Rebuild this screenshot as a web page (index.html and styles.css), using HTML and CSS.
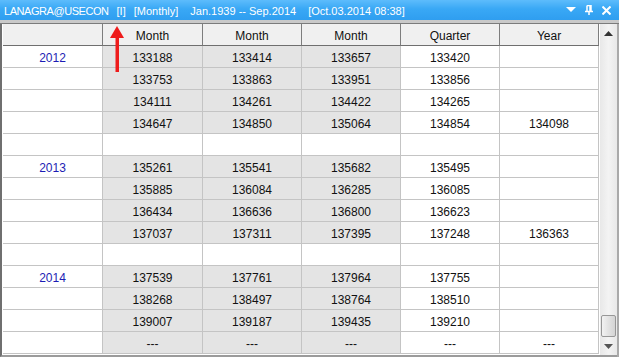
FILE: index.html
```html
<!DOCTYPE html>
<html lang="en">
<head>
  <meta charset="UTF-8">
  <title>LANAGRA@USECON</title>
  <link rel="stylesheet" href="styles.css">
</head>
<body>

<div class="window">

  <!-- title bar -->
  <div class="titlebar">
    <div class="title">
      <span class="user">LANAGRA@USECON</span>
      <span class="gap-s">[I]</span>
      <span class="gap-s">[Monthly]</span>
      <span class="gap-l">Jan.1939 -- Sep.2014</span>
      <span class="gap-l">[Oct.03.2014 08:38]</span>
    </div>
    <div class="controls">
      <svg width="10" height="6" viewBox="0 0 10 6"><path d="M0 0 H10 L5 5 Z" fill="#fff"/></svg>
      <svg width="8" height="10" viewBox="0 0 8 10"><path d="M2 0.5 H6 V6 M2 0.5 V6 M0 6.5 H8 M4 6.5 V10 M5 1 V6" stroke="#fff" stroke-width="1.5" fill="none"/></svg>
      <svg width="9" height="9" viewBox="0 0 9 9"><path d="M0.5 0.5 L8.5 8.5 M8.5 0.5 L0.5 8.5" stroke="#fff" stroke-width="2"/></svg>
    </div>
  </div>
  <div class="toolbar-edge"></div>

  <div class="content">
    <div class="grid" id="grid">
      <div class="hd"></div>
      <div class="hd">Month</div>
      <div class="hd">Month</div>
      <div class="hd">Month</div>
      <div class="hd">Quarter</div>
      <div class="hd">Year</div>
    </div>

    <div class="scrollbar">
      <div class="sb-btn"><svg width="9" height="5" viewBox="0 0 9 5"><path d="M0 5 L4.5 0 L9 5 Z" fill="#333"/></svg></div>
      <div class="sb-track"></div>
      <div class="sb-thumb"></div>
      <div class="sb-btn"><svg width="9" height="5" viewBox="0 0 9 5"><path d="M0 0 L4.5 5 L9 0 Z" fill="#555"/></svg></div>
    </div>
  </div>

  <!-- red pointer over the [I] marker -->
  <svg class="pointer" width="16" height="46" viewBox="0 0 16 46">
    <path d="M8 0 L15 12 L1 12 Z" fill="#ee1c1c"/>
    <rect x="6.5" y="11" width="3.5" height="35" fill="#ee1c1c"/>
  </svg>
</div>

<script>
  const data = [
    ["2012", "133188", "133414", "133657", "133420", ""],
    ["", "133753", "133863", "133951", "133856", ""],
    ["", "134111", "134261", "134422", "134265", ""],
    ["", "134647", "134850", "135064", "134854", "134098"],
    null,
    ["2013", "135261", "135541", "135682", "135495", ""],
    ["", "135885", "136084", "136285", "136085", ""],
    ["", "136434", "136636", "136800", "136623", ""],
    ["", "137037", "137311", "137395", "137248", "136363"],
    null,
    ["2014", "137539", "137761", "137964", "137755", ""],
    ["", "138268", "138497", "138764", "138510", ""],
    ["", "139007", "139187", "139435", "139210", ""],
    ["", "---", "---", "---", "---", "---"]
  ];

  const grid = document.getElementById("grid");
  data.forEach(row => {
    for (let i = 0; i < 6; i++) {
      const cell = document.createElement("div");
      cell.className = "cell";
      if (row && i >= 1 && i <= 3) cell.classList.add("month");
      if (row && i === 0) cell.classList.add("year");
      cell.textContent = row ? row[i] : "";
      grid.appendChild(cell);
    }
  });
</script>

</body>
</html>
```

FILE: styles.css
```css
body {
  margin: 0;
  font-family: 'Liberation Sans', Arial, sans-serif;
  font-size: 11px;
  background: #fff;
}

.window {
  position: relative;
  width: 619px;
  height: 357px;
  overflow: hidden;
  background: #a9a9a9;
}

.titlebar {
  height: 20px;
  display: flex;
  align-items: center;
  justify-content: space-between;
  background: linear-gradient(#5dbcfc, #39a8f5 45%, #2f9ef0);
  color: #fff;
  font-size: 11px;
}

.title {
  display: flex;
  padding: 2px 0 0 4px;
  white-space: nowrap;
}

.title .user {
  letter-spacing: -0.45px;
}

.title .gap-s {
  margin-left: 8px;
}

.title .gap-l {
  margin-left: 12px;
}

.controls {
  display: flex;
  align-items: center;
  gap: 9px;
  padding-right: 8px;
}

.toolbar-edge {
  height: 3px;
  background: #c9c9c9;
  border-bottom: 1px solid #7b7b7b;
}

.content {
  display: flex;
  height: 331px;
  margin-right: 2px;
  border-left: 2px solid #6f6f6f;
  border-bottom: 2px solid #9b9b9b;
  background: #fff;
}

.grid {
  display: grid;
  grid-template-columns: 100px 100px 99px 99px 99px 99px;
  grid-auto-rows: 22px;
  align-content: start;
  margin-left: 1px;
}

.hd {
  display: flex;
  align-items: center;
  justify-content: center;
  padding-top: 2px;
  background: #f0f0f0;
  border-right: 1px solid #7d7d7d;
  border-bottom: 1px solid #6f6f6f;
  box-sizing: border-box;
  font-size: 12px;
  color: #111;
}

.cell {
  display: flex;
  align-items: center;
  justify-content: center;
  padding-top: 2px;
  border-right: 1px solid #c4c4c4;
  border-bottom: 1px solid #c4c4c4;
  box-sizing: border-box;
  font-size: 12px;
  color: #111;
  background: #fff;
}

.cell.month {
  background: #e4e4e4;
}

.cell.year {
  color: #1c1cb4;
}

.scrollbar {
  position: relative;
  display: flex;
  flex-direction: column;
  width: 17px;
  margin-left: 1px;
  background: linear-gradient(90deg, #e8e8e8, #f3f3f3 50%, #e8e8e8);
}

.sb-btn {
  height: 18px;
  display: flex;
  align-items: center;
  justify-content: center;
}

.sb-track {
  flex: 1;
}

.sb-thumb {
  position: absolute;
  left: 1px;
  right: 1px;
  bottom: 18px;
  height: 20px;
  border: 1px solid #979797;
  border-radius: 2px;
  background: linear-gradient(90deg, #f2f2f2, #e2e2e2 50%, #d4d4d4);
}

.pointer {
  position: absolute;
  left: 109px;
  top: 26px;
}
```
